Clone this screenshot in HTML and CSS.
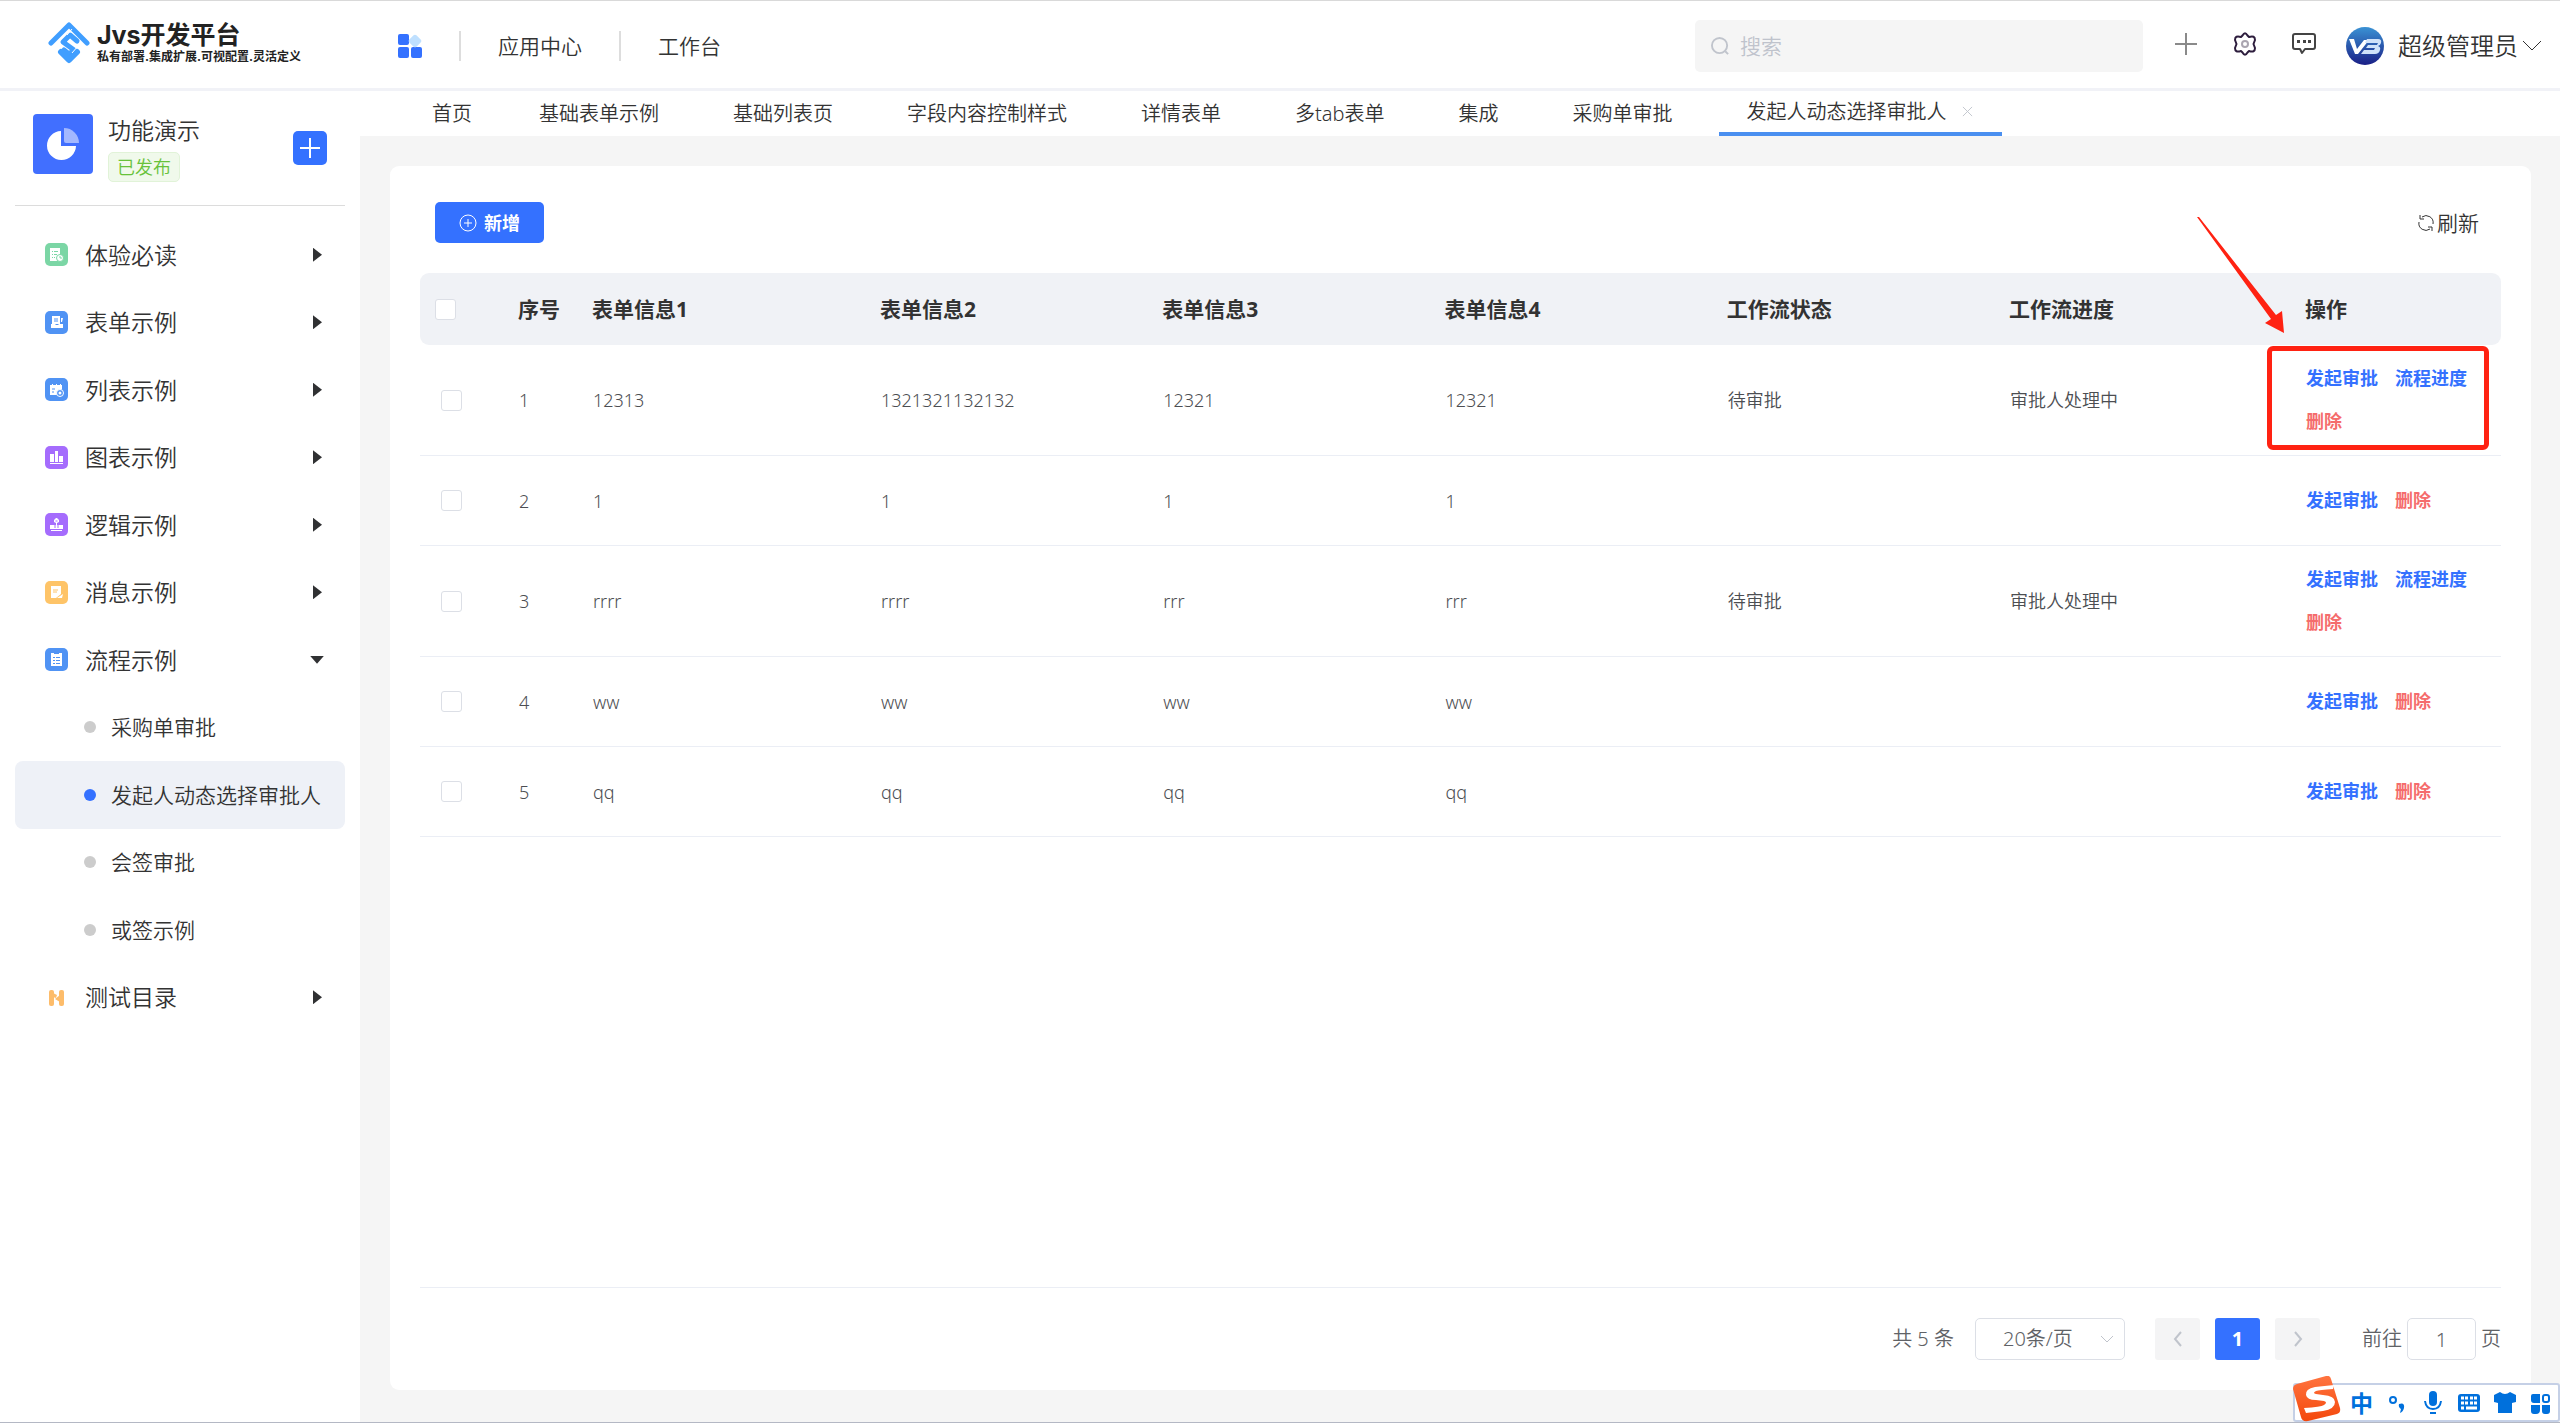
FILE: index.html
```html
<!DOCTYPE html>
<html lang="zh-CN">
<head>
<meta charset="utf-8">
<meta name="viewport" content="width=device-width, initial-scale=1">
<title>Jvs开发平台</title>
<link rel="stylesheet" href="styles.css">
</head>
<body>
<header class="topbar">
  <a class="brand" href="#">
    <svg class="brand-mark" viewBox="0 0 42 42" aria-hidden="true">
      <g fill="none" stroke="#409eff" stroke-width="5" stroke-linejoin="round" stroke-linecap="round">
        <path d="M3 21 21 3l18 18" stroke-width="5"/>
        <path d="M29 19l-7-6-7 7 11 8-5 4-5-4"/>
        <path d="M13 30l8 8 8-8" stroke-width="6"/>
      </g>
      <path d="M24 7l-5 6M30 24l-6 7" stroke="#fff" stroke-width="1"/>
    </svg>
    <span class="brand-text">
      <span class="brand-name">Jvs开发平台</span>
      <span class="brand-slogan">私有部署.集成扩展.可视配置.灵活定义</span>
    </span>
  </a>
  <nav class="topnav">
    <svg class="apps" viewBox="0 0 24 24" aria-hidden="true">
      <g fill="#3471ff"><rect width="11" height="11" rx="2"/><rect y="13" width="11" height="11" rx="2"/><rect x="13" y="13" width="11" height="11" rx="2"/></g>
      <rect x="12" y="2" width="10" height="10" rx="2" fill="#bfe0ff" transform="rotate(45 17 7)"/>
    </svg>
    <a href="#">应用中心</a>
    <a href="#">工作台</a>
  </nav>
  <label class="search">
    <svg viewBox="0 0 20 20" aria-hidden="true"><circle cx="9" cy="9" r="8"/><path d="M15 15l3 3"/></svg>
    <input type="search" placeholder="搜索" aria-label="搜索">
  </label>
  <div class="tools">
    <button type="button" aria-label="新建"><svg viewBox="0 0 24 24"><path d="M12 1v22M1 12h22" fill="none" stroke="#8a8a8a" stroke-width="2"/></svg></button>
    <button type="button" aria-label="设置"><svg viewBox="0 0 24 24"><path d="M9.500 3.500Q12-1 14.500 3.500L16 5Q22 3 22 8L20.500 12 22 16Q22 21 16 19L14.500 20.500Q12 25 9.500 20.500L8 19Q2 21 2 16L3.500 12 2 8Q2 3 8 5Z" fill="none" stroke="#2d1d3d" stroke-width="2" stroke-linejoin="round"/><circle cx="12" cy="12" r="3" fill="none" stroke="#aaa5b0" stroke-width="2"/></svg></button>
    <button type="button" aria-label="消息"><svg viewBox="0 0 24 24"><path d="M3 2h18q2 0 2 2v11q0 2-2 2h-8l-3 4-2-4H3q-2 0-2-2V4q0-2 2-2Z" fill="none" stroke="#444" stroke-width="2" stroke-linejoin="round"/><path d="M5 8h3v3H5zM11 8h3v3h-3zM16 8h3v3h-3z" fill="#444"/></svg></button>
  </div>
  <button class="user" type="button">
    <svg class="avatar" viewBox="0 0 38 38" aria-hidden="true">
      <defs><linearGradient id="av" x1="0" y1="0" x2="0" y2="1"><stop offset="0" stop-color="#3a92d4"/><stop offset="1" stop-color="#1a1f86"/></linearGradient></defs>
      <circle cx="19" cy="19" r="19" fill="url(#av)"/>
      <path d="M3 12h5l3 10 7-9h5L12 27H9Z" fill="#fff"/>
      <path d="M21 12h11q4 0 3 4-1 3-3 3 3 1 2 4-1 4-5 4H15l3-4h10l1-2h-9l2-3h9l1-2H19Z" fill="#cfe2fa"/>
    </svg>
    <span>超级管理员</span>
    <svg class="caret" viewBox="0 0 20 12" aria-hidden="true"><path d="M1 1l9 9 9-9"/></svg>
  </button>
</header>

<div class="shell">
  <aside class="sidebar">
    <div class="app">
      <svg class="app-icon" viewBox="0 0 60 60" aria-hidden="true"><rect width="60" height="60" rx="4" fill="#416fff"/><path d="M28 17a14.500 14.500 0 1 0 15 15H28Z" fill="#fff"/><path d="M31 14a15 15 0 0 1 15 15H33q-2 0-2-2Z" fill="#a3b8ff"/></svg>
      <div class="app-info"><span class="app-name">功能演示</span><span class="tag">已发布</span></div>
      <button class="add" type="button" aria-label="添加"><svg viewBox="0 0 20 20"><path d="M10 0v20M0 10h20"/></svg></button>
    </div>
    <nav>
      <ul class="menu">
        <li><a href="#"><svg class="ico" viewBox="0 0 23 23"><rect width="23" height="23" rx="5" fill="#7bd6a5"/><path d="M5 5h10v7l-3 6H5Z" fill="#fff"/><path d="M7 8.500h1m1 0h4M7 11.500h1m1 0h3M7 14.500h1m1 0h1" stroke="#7bd6a5"/><circle cx="15" cy="15" r="3.500" fill="#fff" stroke="#7bd6a5"/><path d="M15 13v2h2" fill="none" stroke="#7bd6a5"/></svg>体验必读<i class="arrow"></i></a></li>
        <li><a href="#"><svg class="ico" viewBox="0 0 23 23"><rect width="23" height="23" rx="5" fill="#5093f4"/><path d="M7 5h8v8H7ZM16 7h2l-1 4h-1ZM6 13h4l1 1h2l1-1h4v4H6Z" fill="#fff"/><path d="M9 8h4M9 10h4" stroke="#5093f4"/></svg>表单示例<i class="arrow"></i></a></li>
        <li><a href="#"><svg class="ico" viewBox="0 0 23 23"><rect width="23" height="23" rx="5" fill="#5093f4"/><path d="M5 7h2V6h1v1h3V6h1v1h3V6h1v1h1v4l-5 6H5Z" fill="#fff"/><path d="M7 11h3M7 14h2" stroke="#5093f4"/><circle cx="15" cy="15" r="3.500" fill="#5093f4" stroke="#fff"/><circle cx="15" cy="15" r="1.500" fill="#fff"/></svg>列表示例<i class="arrow"></i></a></li>
        <li><a href="#"><svg class="ico" viewBox="0 0 23 23"><rect width="23" height="23" rx="5" fill="#a56cfd"/><path d="M5 8h4v8H5ZM10 5h3v11h-3ZM14 10h4v6h-4ZM5 17h13v1H5Z" fill="#fff"/></svg>图表示例<i class="arrow"></i></a></li>
        <li><a href="#"><svg class="ico" viewBox="0 0 23 23"><rect width="23" height="23" rx="5" fill="#a56cfd"/><path d="M9 7l2-2h1l2 2v2l-2 1v2h6v4H5v-4h6v-2L9 9ZM6 17h11v1H6Z" fill="#fff"/><path d="M10.500 8h2M10 12v3M13 12v3" stroke="#a56cfd"/></svg>逻辑示例<i class="arrow"></i></a></li>
        <li><a href="#"><svg class="ico" viewBox="0 0 23 23"><rect width="23" height="23" rx="5" fill="#fec468"/><path d="M6 5h10v8l-5 4H6Z" fill="#fff"/><path d="M8 9h5M8 11h4" stroke="#fec468"/><path d="M12 17l6-4-1 4Z" fill="#fff"/></svg>消息示例<i class="arrow"></i></a></li>
        <li><a href="#"><svg class="ico" viewBox="0 0 23 23"><rect width="23" height="23" rx="5" fill="#5093f4"/><path d="M6 5h3v1h5V5h3v13H6Z" fill="#fff"/><path d="M8 9.500h2m1 0h4M8 12.500h2m1 0h4M8 15.500h2m1 0h4" stroke="#5093f4"/></svg>流程示例<i class="arrow down"></i></a></li>
        <li><a class="sub" href="#">采购单审批</a></li>
        <li><a class="sub current" href="#" aria-current="page">发起人动态选择审批人</a></li>
        <li><a class="sub" href="#">会签审批</a></li>
        <li><a class="sub" href="#">或签示例</a></li>
        <li><a href="#"><svg class="ico" viewBox="0 0 23 23"><rect x="4" y="4" width="5" height="16" rx="2" fill="#fdbc6a"/><rect x="14" y="4" width="5" height="16" rx="2" fill="#fdbc6a"/><path d="M8 7l4 2-1 3-3-1ZM15 9v7l-5-3Z" fill="#fdbc6a"/></svg>测试目录<i class="arrow"></i></a></li>
      </ul>
    </nav>
  </aside>

  <div class="content">
    <nav class="tabs">
      <a href="#">首页</a><a href="#">基础表单示例</a><a href="#">基础列表页</a><a href="#">字段内容控制样式</a><a href="#">详情表单</a><a href="#">多tab表单</a><a href="#">集成</a><a href="#">采购单审批</a>
      <span class="tab-active"><a href="#" aria-current="page">发起人动态选择审批人</a><button type="button" aria-label="关闭"><svg viewBox="0 0 12 12"><path d="M1 1l10 10M11 1 1 11"/></svg></button></span>
    </nav>
    <main class="card">
      <div class="toolbar">
        <button class="create" type="button"><svg viewBox="0 0 18 18" aria-hidden="true"><circle cx="9" cy="9" r="8"/><path d="M9 5v8M5 9h8"/></svg>新增</button>
        <button class="refresh" type="button"><svg viewBox="0 0 18 18" aria-hidden="true"><path d="M5 3a7 7 0 0 1 11 7M13 15A7 7 0 0 1 2 8M3 1v4h4M15 17v-4h-4"/></svg>刷新</button>
      </div>
      <table class="grid">
        <colgroup><col class="c-check"><col class="c-no"><col class="c-first"><col><col><col><col><col class="c-progress"><col class="c-ops"></colgroup>
        <thead><tr><th><input type="checkbox" aria-label="全选"></th><th>序号</th><th>表单信息1</th><th>表单信息2</th><th>表单信息3</th><th>表单信息4</th><th>工作流状态</th><th>工作流进度</th><th>操作</th></tr></thead>
        <tbody>
          <tr><td><input type="checkbox" aria-label="选择第1行"></td><td>1</td><td>12313</td><td>1321321132132</td><td>12321</td><td>12321</td><td>待审批</td><td>审批人处理中</td><td><div class="ops"><a href="#">发起审批</a><a href="#">流程进度</a><a class="del" href="#">删除</a></div></td></tr>
          <tr><td><input type="checkbox" aria-label="选择第2行"></td><td>2</td><td>1</td><td>1</td><td>1</td><td>1</td><td></td><td></td><td><div class="ops"><a href="#">发起审批</a><a class="del" href="#">删除</a></div></td></tr>
          <tr><td><input type="checkbox" aria-label="选择第3行"></td><td>3</td><td>rrrr</td><td>rrrr</td><td>rrr</td><td>rrr</td><td>待审批</td><td>审批人处理中</td><td><div class="ops"><a href="#">发起审批</a><a href="#">流程进度</a><a class="del" href="#">删除</a></div></td></tr>
          <tr><td><input type="checkbox" aria-label="选择第4行"></td><td>4</td><td>ww</td><td>ww</td><td>ww</td><td>ww</td><td></td><td></td><td><div class="ops"><a href="#">发起审批</a><a class="del" href="#">删除</a></div></td></tr>
          <tr><td><input type="checkbox" aria-label="选择第5行"></td><td>5</td><td>qq</td><td>qq</td><td>qq</td><td>qq</td><td></td><td></td><td><div class="ops"><a href="#">发起审批</a><a class="del" href="#">删除</a></div></td></tr>
        </tbody>
      </table>
      <footer class="pager">
        <span class="total">共 5 条</span>
        <span class="size"><select aria-label="每页条数"><option>20条/页</option></select><svg viewBox="0 0 14 10" aria-hidden="true"><path d="M1 2l6 6 6-6"/></svg></span>
        <span class="pages">
          <button type="button" aria-label="上一页" disabled><svg viewBox="0 0 10 18"><path d="M8 2 2 9l6 7"/></svg></button>
          <button class="on" type="button">1</button>
          <button type="button" aria-label="下一页" disabled><svg viewBox="0 0 10 18"><path d="M2 2l6 7-6 7"/></svg></button>
        </span>
        <label class="jump">前往<input type="text" value="1">页</label>
      </footer>
    </main>
  </div>
</div>

<svg class="pointer" viewBox="0 0 92 120" aria-hidden="true"><path d="M1 0 3 0 80 98 86 94 88 116 69 106 75 102Z" transform="translate(1 1)" fill="#ff2212"/></svg>
<div class="frame"></div>

<div class="ime">
  <svg class="ime-logo" viewBox="0 0 48 46" aria-hidden="true">
    <defs><linearGradient id="sg" x1="0" y1="0" x2="0" y2="1"><stop offset="0" stop-color="#ff7440"/><stop offset="1" stop-color="#f4480c"/></linearGradient></defs>
    <path d="M4 8 33 0q4-1 5 3l9 29q1 5-3 6L15 45q-6 1-7-4L0 13q0-4 4-5Z" fill="url(#sg)"/>
    <path d="M41 9 22 11q-10 2-9 8 1 5 10 5l8 1q4 1 0 4-3 2-20 3l2 5 17-2q12-2 12-9 0-6-12-7l-7-1q-4-1 0-3 3-1 17-2Z" fill="#fff"/>
  </svg>
  <span class="ime-lang">中</span>
  <svg viewBox="0 0 24 24"><circle cx="8" cy="9" r="3" fill="none" stroke="#0070dc" stroke-width="2"/><path d="M14 13q6-2 5 4-1 4-4 5l1-4q-3-2-2-5Z" fill="#0070dc"/></svg>
  <svg viewBox="0 0 24 24"><rect x="8" y="0" width="8" height="15" rx="4" fill="#0070dc"/><path d="M4 10q1 8 8 8t8-8M9 22h6" fill="none" stroke="#0070dc" stroke-width="2"/></svg>
  <svg viewBox="0 0 24 24"><rect x="1" y="3" width="22" height="18" rx="3" fill="#0070dc"/><path d="M4 7h3m1 0h3m2 0h3m1 0h3M4 12h3m1 0h3m2 0h3m1 0h3" stroke="#fff" stroke-width="3"/><path d="M4 17h3m2 0h11" stroke="#fff" stroke-width="3"/></svg>
  <svg viewBox="0 0 24 24"><path d="M1 4 7 1q5 4 10 0l6 3v7l-4 1v10H5V12l-4-1Z" fill="#0070dc"/></svg>
  <svg viewBox="0 0 24 24"><path d="M4 3h7v9H5q-3 0-3-3V5q0-2 2-2ZM2 14h9v5q0 4-4 4H5q-3 0-3-3ZM13 14h8v6q0 3-3 3h-2q-3 0-3-3Z" fill="#0070dc"/><rect x="14" y="4" width="6" height="7" rx="2" fill="none" stroke="#0070dc" stroke-width="2"/></svg>
</div>
</body>
</html>
```
FILE: styles.css
```css
* { box-sizing: border-box; }

body {
  margin: 0;
  min-height: 100vh;
  display: flex;
  flex-direction: column;
  position: relative;
  border-top: 1px solid #d9d9d9;
  border-bottom: 1px solid #b4b8c4;
  background: #fff;
  color: #333;
  font: 350 21px/30px "Noto Sans", "Noto Sans CJK SC", sans-serif;
}

a { color: inherit; text-decoration: none; }

button {
  padding: 0;
  border: 0;
  background: none;
  color: inherit;
  font: inherit;
  cursor: pointer;
}

input, select { font: inherit; color: inherit; }
svg { display: block; flex: none; }
ul { margin: 0; padding: 0; list-style: none; }

/* top bar */
.topbar {
  display: flex;
  align-items: center;
  height: 90px;
  padding: 3px 18px 0 48px;
  border-bottom: 3px solid #f1f2f7;
}

.brand { display: flex; align-items: center; gap: 7px; width: 350px; margin-bottom: 6px; }
.brand-mark { width: 42px; height: 42px; }
.brand-text {
  display: flex;
  flex-direction: column;
  color: #222;
  font-family: Inter, "Noto Sans CJK SC", sans-serif;
  font-weight: 700;
}
.brand-name { font-size: 25px; line-height: 28px; }
.brand-slogan { font-size: 12px; line-height: 16px; }

.topnav { display: flex; align-items: center; }
.apps { width: 24px; height: 24px; margin-right: 37px; }
.topnav a { padding: 0 37px; border-left: 2px solid #ddd; line-height: 30px; }

.search {
  display: flex;
  align-items: center;
  gap: 10px;
  width: 448px;
  height: 52px;
  margin-left: auto;
  padding: 0 16px;
  border-radius: 5px;
  background: #f5f5f5;
}
.search svg { width: 19px; height: 19px; fill: none; stroke: #c0c4cc; stroke-width: 2; }
.search input { flex: 1; min-width: 0; border: 0; padding: 0; outline: 0; background: none; }
.search input::placeholder { color: #bfc3cc; }

.tools { display: flex; gap: 35px; margin: 0 30px 4px 31px; }
.tools svg { width: 24px; height: 24px; }

.user { display: flex; align-items: center; font-size: 24px; }
.avatar { width: 38px; height: 38px; margin-right: 14px; }
.caret { width: 20px; height: 12px; margin-left: 4px; fill: none; stroke: #333; stroke-width: 1; }

/* frame below the top bar */
.shell { display: flex; flex: 1; }

.sidebar { flex: none; width: 360px; padding: 0 15px; }
.app {
  display: flex;
  align-items: center;
  height: 115px;
  padding: 0 18px;
  border-bottom: 1px solid #dcdcdc;
}
.app-icon { width: 60px; height: 60px; margin-bottom: 9px; }
.app-info { display: flex; flex-direction: column; align-items: flex-start; gap: 6px; margin-left: 15px; }
.app-name { font-size: 23px; line-height: 32px; }
.tag {
  padding: 0 8px;
  border: 1px solid #e1f3d8;
  border-radius: 5px;
  background: #f0f9eb;
  color: #67c23a;
  font-size: 18px;
  line-height: 28px;
}
.add {
  display: flex;
  align-items: center;
  justify-content: center;
  width: 34px;
  height: 34px;
  margin-left: auto;
  border-radius: 5px;
  background: #3471ff;
}
.add svg { width: 20px; height: 20px; stroke: #fff; stroke-width: 2; }

.menu { display: grid; grid-auto-rows: 1fr; height: 810px; margin-top: 15px; }
.menu a {
  display: flex;
  align-items: center;
  height: 100%;
  padding: 0 23px 0 30px;
  border-radius: 8px;
  font-size: 23px;
}
.ico { width: 23px; height: 23px; margin-right: 17px; }
.arrow {
  width: 9px;
  height: 14px;
  margin-left: auto;
  background: #303133;
  clip-path: polygon(0 0, 100% 50%, 0 100%);
}
.arrow.down { width: 14px; height: 8px; margin-right: -2px; clip-path: polygon(0 0, 100% 0, 50% 100%); }
.menu .sub { padding: 0 0 0 69px; font-size: 21px; }
.sub::before {
  content: "";
  width: 12px;
  height: 12px;
  margin-right: 15px;
  border-radius: 50%;
  background: #ccc;
}
.menu .current { background: #eef1f7; }
.current::before { background: #3471ff; }

.content {
  flex: 1;
  min-width: 0;
  display: flex;
  flex-direction: column;
  background: #f5f5f5;
}

.tabs {
  display: flex;
  height: 45px;
  padding-left: 35px;
  background: #fff;
  font-size: 20px;
  line-height: 46px;
}
.tabs > a { padding: 0 37px; }
.tabs > a:first-child { padding-right: 30px; }
.tab-active {
  display: flex;
  align-items: center;
  gap: 15px;
  margin-left: 9px;
  padding: 0 29px 0 28px;
  border-bottom: 4px solid #4a8ff0;
}
.tab-active svg { width: 11px; height: 11px; stroke: #c0c4cc; stroke-width: 1; }

/* list card */
.card {
  flex: 1;
  display: flex;
  flex-direction: column;
  margin: 30px 29px 32px 30px;
  padding: 36px 30px 30px;
  border-radius: 9px;
  background: #fff;
}
.toolbar {
  display: flex;
  justify-content: space-between;
  align-items: center;
  margin-bottom: 30px;
  padding: 0 22px 0 15px;
}
.create {
  display: flex;
  align-items: center;
  gap: 7px;
  height: 41px;
  padding: 0 24px;
  border-radius: 5px;
  background: #3471ff;
  color: #fff;
  font-size: 18px;
  font-weight: 700;
}
.create svg { width: 18px; height: 18px; fill: none; stroke: #fff; stroke-width: 1; }
.refresh { display: flex; align-items: center; gap: 2px; }
.refresh svg { width: 18px; height: 18px; fill: none; stroke: #333; stroke-width: 1; }

.grid { width: 100%; table-layout: fixed; border-spacing: 0; text-align: left; }
.c-check { width: 83px; }
.c-no { width: 74px; }
.c-first { width: 288px; }
.c-progress { width: 296px; }
.c-ops { width: 211px; }
.grid th {
  height: 72px;
  padding: 0 0 0 15px;
  background: #f0f2f6;
  font-size: 21px;
  font-weight: 700;
  white-space: nowrap;
}
.grid th:first-child { border-radius: 9px 0 0 9px; }
.grid th:last-child { border-radius: 0 9px 9px 0; }
.grid td {
  height: 90px;
  padding: 12px 15px 12px 16px;
  border-bottom: 1px solid #ebeef5;
  color: #4c4e52;
  font-size: 18px;
}
.grid td:first-child { padding-left: 21px; }
.grid input {
  display: block;
  appearance: none;
  width: 21px;
  height: 21px;
  margin: 0;
  border: 1px solid #dcdfe6;
  border-radius: 3px;
  background: #fff;
}
.ops { display: flex; flex-wrap: wrap; column-gap: 17px; line-height: 43px; color: #3471ff; font-weight: 700; }
.ops .del { color: #f56c6c; }

.pager {
  display: flex;
  align-items: center;
  justify-content: flex-end;
  margin-top: auto;
  padding-top: 30px;
  border-top: 1px solid #ebeef5;
  color: #606266;
  font-size: 20px;
}
.size { position: relative; margin: 0 30px 0 21px; }
.size select {
  display: block;
  appearance: none;
  width: 150px;
  height: 42px;
  padding: 0 0 0 27px;
  border: 1px solid #dcdfe6;
  border-radius: 5px;
  background: #fff;
}
.size svg {
  position: absolute;
  top: 16px;
  right: 11px;
  width: 14px;
  height: 10px;
  fill: none;
  stroke: #c0c4cc;
  stroke-width: 1;
  pointer-events: none;
}
.pages { display: flex; gap: 15px; }
.pages button {
  display: flex;
  align-items: center;
  justify-content: center;
  width: 45px;
  height: 42px;
  border-radius: 3px;
  background: #f4f4f5;
}
.pages svg { width: 10px; height: 18px; fill: none; stroke: #c0c4cc; stroke-width: 2; }
.pages .on { background: #3471ff; color: #fff; font-weight: 700; }
.jump { display: flex; align-items: center; gap: 5px; margin-left: 42px; }
.jump input {
  width: 69px;
  height: 42px;
  border: 1px solid #dcdfe6;
  border-radius: 5px;
  text-align: center;
}

/* annotation over the list */
.pointer { position: absolute; top: 215px; right: 273px; width: 92px; height: 120px; }
.frame {
  position: absolute;
  top: 345px;
  right: 71px;
  width: 222px;
  height: 104px;
  border: 5px solid #ff2212;
  border-radius: 6px;
}

/* input method bar */
.ime {
  position: absolute;
  right: 0;
  bottom: 0;
  display: flex;
  align-items: center;
  gap: 12px;
  height: 39px;
  padding: 0 5px 0 55px;
  border: 2px solid #c5d0e6;
  border-radius: 3px;
  background: #fff;
}
.ime svg { width: 24px; height: 24px; }
.ime .ime-logo { position: absolute; left: -2px; bottom: -2px; width: 48px; height: 46px; }
.ime-lang { color: #0070dc; font-size: 23px; font-weight: 700; }
```
